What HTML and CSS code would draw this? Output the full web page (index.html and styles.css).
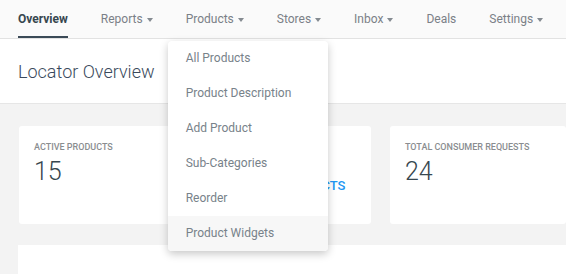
FILE: index.html
```html
<!DOCTYPE html>
<html lang="en">
<head>
  <meta charset="UTF-8">
  <title>Locator Overview</title>
  <meta name="viewport" content="width=device-width, initial-scale=1.0">
  <link rel="stylesheet" href="styles.css">
</head>
<body>
  <header class="topnav">
    <nav>
      <a href="#" class="nav-item active">Overview</a>
      <a href="#" class="nav-item">Reports<span class="caret"></span></a>
      <div class="nav-item has-menu">
        <a href="#">Products<span class="caret"></span></a>
        <ul class="dropdown">
          <li><a href="#">All Products</a></li>
          <li><a href="#">Product Description</a></li>
          <li><a href="#">Add Product</a></li>
          <li><a href="#">Sub-Categories</a></li>
          <li><a href="#">Reorder</a></li>
          <li class="hover"><a href="#">Product Widgets</a></li>
        </ul>
      </div>
      <a href="#" class="nav-item">Stores<span class="caret"></span></a>
      <a href="#" class="nav-item">Inbox<span class="caret"></span></a>
      <a href="#" class="nav-item">Deals</a>
      <a href="#" class="nav-item">Settings<span class="caret"></span></a>
    </nav>
  </header>

  <div class="page-title">
    <h1>Locator Overview</h1>
  </div>

  <div class="content">
    <div class="stats">
      <div class="card">
        <div class="card-label">Active Products</div>
        <div class="card-value">15</div>
      </div>
      <div class="card">
        <div class="card-label">Inactive Products</div>
        <a href="#" class="card-link">View All Products</a>
      </div>
      <div class="card">
        <div class="card-label">Total Consumer Requests</div>
        <div class="card-value">24</div>
      </div>
    </div>
    <div class="panel"></div>
  </div>
</body>
</html>
```

FILE: styles.css
```css
html, body {
  height: 100%;
}
body {
  margin: 0;
  font-family: Roboto, 'Liberation Sans', sans-serif;
  background: #f3f3f3;
  color: #37474f;
  overflow: hidden;
}
a {
  text-decoration: none;
  color: inherit;
}
.topnav {
  background: #fafafa;
  border-bottom: 1px solid #e2e2e2;
  height: 38px;
}
nav {
  display: flex;
  height: 38px;
  padding-left: 18px;
  gap: 33px;
}
.nav-item {
  display: flex;
  align-items: center;
  height: 38px;
  box-sizing: border-box;
  font-size: 12px;
  color: #7a8087;
  position: relative;
}
.nav-item > a {
  display: flex;
  align-items: center;
  height: 100%;
}
.nav-item.active {
  color: #37474f;
  font-weight: bold;
  border-bottom: 2px solid #3b4a57;
  padding-top: 2px;
}
.caret {
  display: inline-block;
  width: 0;
  height: 0;
  margin-left: 4px;
  margin-top: 1px;
  border-left: 3.5px solid transparent;
  border-right: 3.5px solid transparent;
  border-top: 4px solid #858b91;
}
.dropdown {
  position: absolute;
  top: 41px;
  left: -18px;
  width: 160px;
  margin: 0;
  padding: 0;
  list-style: none;
  background: #fff;
  border-radius: 4px;
  box-shadow: 0 3px 9px rgba(0,0,0,0.22);
  overflow: hidden;
  z-index: 10;
}
.dropdown li a {
  display: flex;
  align-items: center;
  height: 35px;
  box-sizing: border-box;
  padding: 0 0 2px 18px;
  font-size: 12px;
  color: #78828a;
}
.dropdown li.hover {
  background: #f7f7f7;
}
.page-title {
  background: #fff;
  border-bottom: 1px solid #e6e6e6;
  height: 64px;
  display: flex;
  align-items: center;
  padding-left: 18px;
}
.page-title h1 {
  margin: 0;
  font-size: 18px;
  font-weight: 300;
  color: #3a4a5c;
}
.stats {
  display: grid;
  grid-template-columns: 166px 167px 1fr;
  gap: 19px;
  padding: 22px 0 21px 19px;
}
.card {
  background: #fff;
  border-radius: 3px;
  height: 98px;
  box-sizing: border-box;
  padding: 16px 15px;
}
.card-label {
  font-size: 9px;
  font-weight: 500;
  text-transform: uppercase;
  color: #8a8d90;
}
.card-value {
  font-size: 25px;
  font-weight: 300;
  color: #37474f;
  margin-top: 5px;
}
.card-link {
  display: block;
  margin-top: 26px;
  font-size: 13px;
  font-weight: 500;
  text-transform: uppercase;
  color: #2196f3;
}
.panel {
  background: #fff;
  margin-left: 18px;
  height: 200px;
}
```
